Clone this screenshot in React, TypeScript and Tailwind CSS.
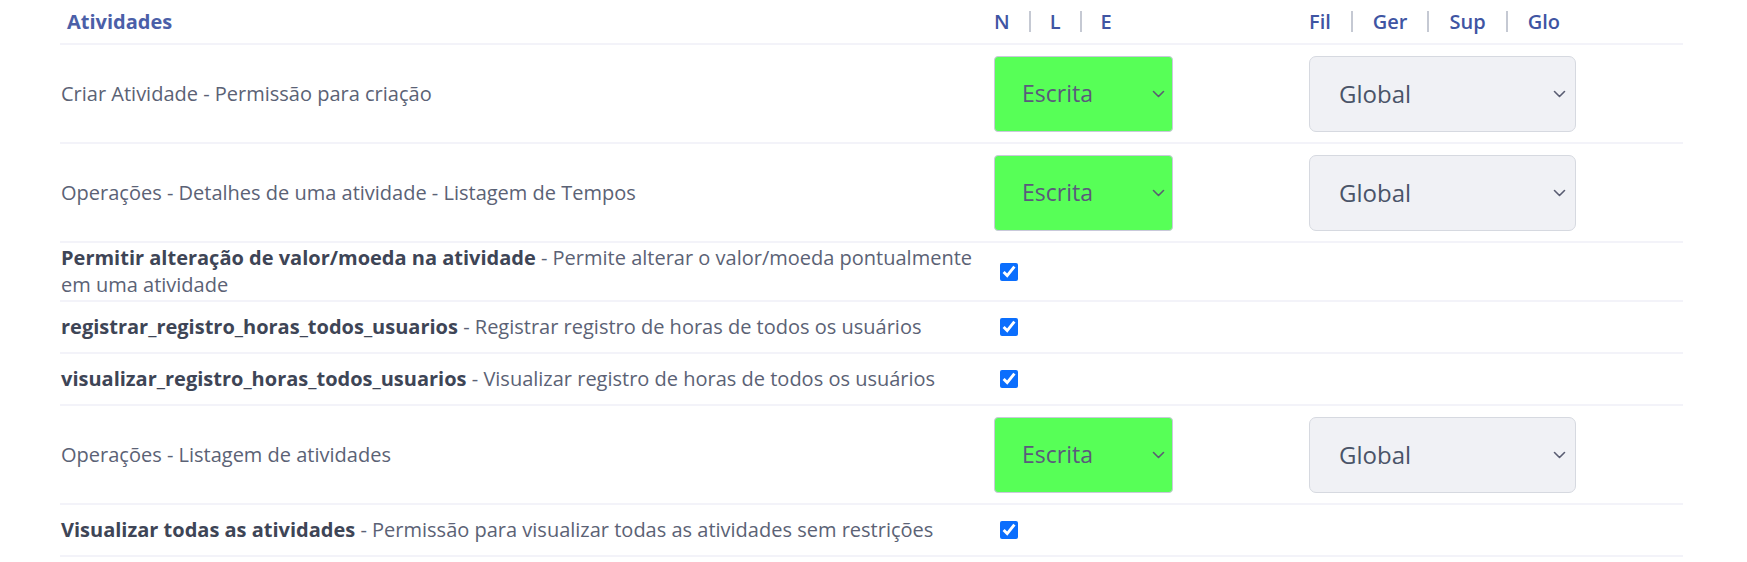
import React from "react";

type Row =
  | { kind: "select"; label: string }
  | { kind: "check"; title: string; desc: string };

const rows: Row[] = [
  { kind: "select", label: "Criar Atividade - Permissão para criação" },
  { kind: "select", label: "Operações - Detalhes de uma atividade - Listagem de Tempos" },
  {
    kind: "check",
    title: "Permitir alteração de valor/moeda na atividade",
    desc: "Permite alterar o valor/moeda pontualmente em uma atividade",
  },
  {
    kind: "check",
    title: "registrar_registro_horas_todos_usuarios",
    desc: "Registrar registro de horas de todos os usuários",
  },
  {
    kind: "check",
    title: "visualizar_registro_horas_todos_usuarios",
    desc: "Visualizar registro de horas de todos os usuários",
  },
  { kind: "select", label: "Operações - Listagem de atividades" },
  {
    kind: "check",
    title: "Visualizar todas as atividades",
    desc: "Permissão para visualizar todas as atividades sem restrições",
  },
];

function Chevron() {
  return (
    <svg width="13" height="8" viewBox="0 0 13 8" fill="none" className="shrink-0">
      <path d="M1.5 1.5l5 5 5-5" stroke="#5a5d72" strokeWidth="1.6" strokeLinecap="round" strokeLinejoin="round" />
    </svg>
  );
}

function Sep() {
  return <span className="h-[21px] w-[2px] bg-[#c5c9d3]" />;
}

function LevelSelect() {
  return (
    <div className="flex h-[76px] w-[179px] items-center justify-between rounded-[4px] border border-[#c9c9da] bg-[#57ff57] pl-[27px] pr-[7px] text-[23px] text-[#5a5a7c]">
      <span>Escrita</span>
      <Chevron />
    </div>
  );
}

function ScopeSelect() {
  return (
    <div className="flex h-[76px] w-[267px] items-center justify-between rounded-[7px] border border-[#d6d9e0] bg-[#f0f1f5] pl-[29px] pr-[9px] text-[24px] text-[#4a5468]">
      <span>Global</span>
      <Chevron />
    </div>
  );
}

export default function App() {
  return (
    <div className="min-h-[562px] bg-white pl-[60px] pr-[64px] font-['Open_Sans',sans-serif]">
      <div className="flex h-[45px] items-center border-b-2 border-[#f3f3f9] text-[20px] text-[#3f55a3]">
        <div className="w-[934px] pl-[7px] font-bold text-[#4b5fa8]">Atividades</div>
        <div className="flex w-[315px] items-center gap-[19px] font-semibold">
          <span>N</span>
          <Sep />
          <span>L</span>
          <Sep />
          <span>E</span>
        </div>
        <div className="flex items-center gap-[20px] font-semibold">
          <span>Fil</span>
          <Sep />
          <span>Ger</span>
          <Sep />
          <span>Sup</span>
          <Sep />
          <span>Glo</span>
        </div>
      </div>

      {rows.map((row, i) =>
        row.kind === "select" ? (
          <div key={i} className="flex h-[99px] items-center border-b-2 border-[#f3f3f9]">
            <div className="w-[934px] pl-[1px] text-[20px] text-[#5b6275]">{row.label}</div>
            <div className="w-[315px]">
              <LevelSelect />
            </div>
            <ScopeSelect />
          </div>
        ) : (
          <div key={i} className="flex min-h-[52px] items-center border-b-2 border-[#f3f3f9] py-[2px]">
            <div className="w-[934px] pl-[1px] pr-[4px] text-[20px] leading-[26.5px] text-[#5b6275]">
              <span className="font-bold text-[#3e4556]">{row.title}</span> - {row.desc}
            </div>
            <div className="flex w-[315px] pl-[6px]">
              <input type="checkbox" checked readOnly className="h-[18px] w-[18px] accent-[#0b6efd]" />
            </div>
          </div>
        )
      )}
    </div>
  );
}
